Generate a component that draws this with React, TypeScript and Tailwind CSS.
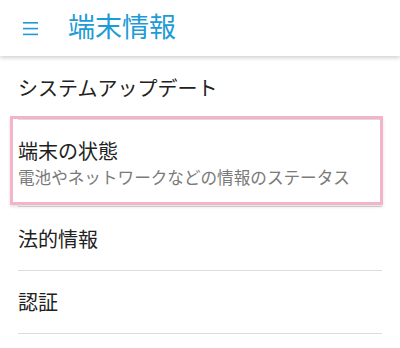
export default function App() {
  const font = { fontFamily: '"Noto Sans CJK JP", "Noto Sans", sans-serif' };
  return (
    <div className="w-[400px] h-[348px] bg-white overflow-hidden" style={font}>
      {/* Top bar */}
      <header className="h-[56px] flex items-center bg-white shadow-[0_2px_4px_rgba(0,0,0,0.18)] relative z-10">
        <svg className="ml-[23px] w-[15px] h-[15px]" viewBox="0 0 15 15">
          <rect x="0" y="1" width="15" height="1.6" fill="#1e9bd7" />
          <rect x="0" y="6.8" width="15" height="1.6" fill="#1e9bd7" />
          <rect x="0" y="12.6" width="15" height="1.6" fill="#1e9bd7" />
        </svg>
        <h1 className="ml-[30px] text-[27px] leading-none text-[#1e9bd7] -mt-[6px]">端末情報</h1>
      </header>

      <div className="flex flex-col">
        <div className="h-[64px] mx-[18px] flex items-center border-b border-[#dcdcdc]">
          <span className="text-[20px] leading-[26px] text-[#212121]">システムアップデート</span>
        </div>

        <div className="relative h-[87px] mx-[18px] border-b border-[#dcdcdc] flex flex-col pt-[18px]">
          <span className="text-[20px] leading-[26px] text-[#212121]">端末の状態</span>
          <span className="text-[16.6px] leading-[26px] text-[#7a7a7a]">電池やネットワークなどの情報のステータス</span>
          {/* highlight frame */}
          <div className="absolute -top-[4px] -left-[8px] -right-[1px] bottom-[1px] border-[3px] border-[#f3b3cb] shadow-[0_2px_3px_rgba(0,0,0,0.12)]" />
        </div>

        <div className="h-[64px] mx-[18px] flex items-center border-b border-[#dcdcdc]">
          <span className="text-[20px] leading-[26px] text-[#212121]">法的情報</span>
        </div>

        <div className="h-[63px] mx-[18px] flex items-center border-b border-[#dcdcdc]">
          <span className="text-[20px] leading-[26px] text-[#212121]">認証</span>
        </div>
      </div>
    </div>
  );
}
